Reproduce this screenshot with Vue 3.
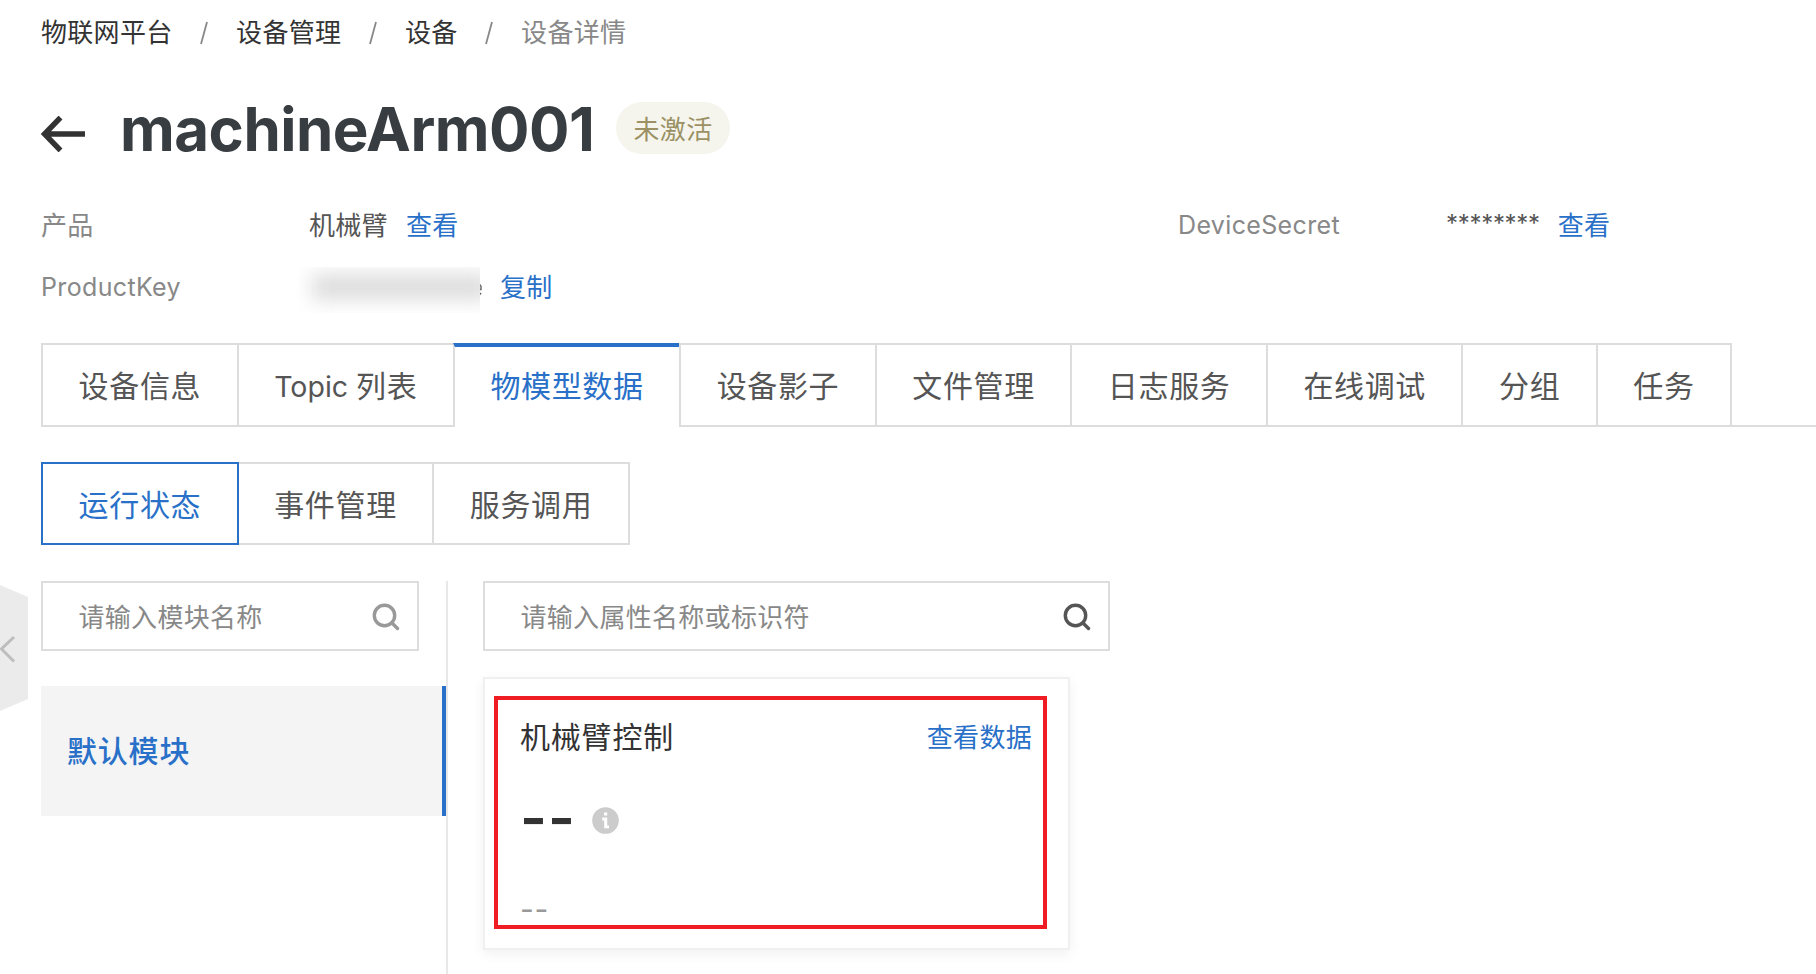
<script setup>
const crumbs = ['物联网平台', '设备管理', '设备', '设备详情']
const tabs = [
  { text: '设备信息' },
  { latin: 'Topic ', text: '列表' },
  { text: '物模型数据', active: true },
  { text: '设备影子' },
  { text: '文件管理' },
  { text: '日志服务' },
  { text: '在线调试' },
  { text: '分组' },
  { text: '任务' },
]
const modes = ['运行状态', '事件管理', '服务调用']
const activeMode = '运行状态'
</script>

<template>
  <div class="page">
    <nav class="crumbs">
      <template v-for="(c, i) in crumbs" :key="c">
        <svg v-if="i" class="slash" width="8" height="24" viewBox="0 0 8 24"><path d="M7 1 1 23" /></svg>
        <span :class="{ current: i === crumbs.length - 1 }">{{ c }}</span>
      </template>
    </nav>

    <header class="heading">
      <svg class="back" width="45" height="36" viewBox="0 0 45 36"><path d="M19.500 1.500 3.500 18 19.500 34.500M3 18H44" /></svg>
      <h1>machineArm001</h1>
      <span class="badge">未激活</span>
    </header>

    <section class="info">
      <div class="row">
        <span class="label">产品</span>
        <span class="value">机械臂</span>
        <a class="link">查看</a>
      </div>
      <div class="row">
        <span class="label latin">DeviceSecret</span>
        <span class="value stars">********</span>
        <a class="link">查看</a>
      </div>
      <div class="row">
        <span class="label latin">ProductKey</span>
        <span class="masked"><i class="smudge"></i></span>
        <svg class="tail" width="2" height="14" viewBox="0 0 2 14"><path d="M0 2.500 1 4.500V7.500H0M0 12.500 1 11" /></svg>
        <a class="link">复制</a>
      </div>
    </section>

    <div class="tabs">
      <div v-for="t in tabs" :key="t.text" class="tab" :class="{ active: t.active }"><span v-if="t.latin" class="word">{{ t.latin }}</span>{{ t.text }}</div>
      <div class="rest"></div>
    </div>

    <div class="modes">
      <div v-for="m in modes" :key="m" class="mode" :class="{ active: m === activeMode }">{{ m }}</div>
    </div>

    <main class="content">
      <aside class="side">
        <div class="search">
          <span>请输入模块名称</span>
          <svg class="glass" width="28" height="28" viewBox="0 0 28 28"><circle cx="12.5" cy="12.5" r="10.2" /><path d="m20 20 5.500 5.500" /></svg>
        </div>
        <div class="module">默认模块</div>
      </aside>
      <div class="main">
        <div class="search wide">
          <span>请输入属性名称或标识符</span>
          <svg class="glass" width="28" height="28" viewBox="0 0 28 28"><circle cx="12.5" cy="12.5" r="10.2" /><path d="m20 20 5.500 5.500" /></svg>
        </div>
        <div class="card">
          <div class="frame">
            <div class="card-head">
              <span class="name">机械臂控制</span>
              <a class="link">查看数据</a>
            </div>
            <div class="reading">
              <span class="big">--</span>
              <svg width="27" height="27" viewBox="0 0 27 27">
                <circle cx="13.5" cy="13.5" r="13.3" fill="#ccc" />
                <path d="M12 5.500h3.200v3H12zM10.200 10.500h5v8H17v2.700h-4.800v-7.700h-2z" fill="#fff" />
              </svg>
            </div>
            <div class="time">--</div>
          </div>
        </div>
      </div>
    </main>

    <svg class="handle" width="28" height="126" viewBox="0 0 28 126">
      <path d="M0 0 28 12V114L0 126Z" fill="#ebebeb" />
      <path d="M14 52 1.5 64 14 76.500" fill="none" stroke="#bdbdbd" stroke-width="3" />
    </svg>
  </div>
</template>

<style>
body {
  background: #fff;
  overflow: hidden;
}
</style>

<style scoped>
* {
  box-sizing: border-box;
}
.page {
  position: relative;
  height: 974px;
  overflow: hidden;
  padding-left: 41px;
  display: flex;
  flex-direction: column;
  font-family: Inter, "Noto Sans CJK SC", sans-serif;
  font-size: 26px;
  letter-spacing: 0.3px;
  color: #555;
  white-space: nowrap;
}
svg {
  flex: none;
}
.crumbs {
  display: flex;
  align-items: center;
  height: 60px;
  color: #333;
}
.crumbs .current {
  color: #888;
}
.slash {
  margin: 6px 28px 0 27.6px;
  fill: none;
  stroke: #888;
  stroke-width: 1.8;
}
.heading {
  display: flex;
  align-items: center;
  height: 128px;
  margin-top: 4px;
}
.back {
  margin: 12px 34px 0 0;
  fill: none;
  stroke: #333;
  stroke-width: 5.4;
}
h1 {
  width: 496px;
  margin: 1px 0 0;
  font-size: 60px;
  line-height: 72px;
  font-weight: 700;
  letter-spacing: -0.5px;
  color: #373d41;
}
.badge {
  width: 114px;
  height: 52px;
  padding-top: 2px;
  border-radius: 26px;
  background: #f5f5ed;
  color: #9b9164;
  line-height: 52px;
  text-align: center;
}
.info {
  display: grid;
  grid-template-columns: 1137px 1fr;
  grid-template-rows: 62px 62px;
}
.row {
  display: flex;
  align-items: center;
}
.label {
  width: 268px;
  color: #888;
}
.latin {
  padding-top: 4px;
  font-size: 25px;
  letter-spacing: 0.35px;
}
.stars {
  font-size: 24px;
  letter-spacing: -0.3px;
}
.link {
  color: #2970c8;
  margin-left: 18px;
}
.masked {
  width: 182px;
  height: 46px;
  margin: 10px 0 0 -11px;
  overflow: hidden;
}
.smudge {
  display: block;
  width: 178px;
  height: 24px;
  margin: 8px 0 0 14px;
  background: #dadada;
  filter: blur(10px);
}
.tail {
  margin-top: 8px;
  fill: none;
  stroke: #666;
  stroke-width: 1.4;
}
.tabs {
  display: flex;
  height: 84px;
  margin-top: 27px;
  font-size: 30px;
  letter-spacing: 0.65px;
}
.tab {
  flex: none;
  padding: 0 35.4px 0 35.6px;
  border: 2px solid #ddd;
  border-right: 0;
  line-height: 82px;
}
.word {
  font-size: 28.5px;
  letter-spacing: 0;
  white-space: pre;
}
.tab.active {
  border-top: 4px solid #2970c8;
  border-bottom: 0;
  line-height: 78px;
  color: #2970c8;
}
.rest {
  flex: 1;
  border-left: 2px solid #ddd;
  border-bottom: 2px solid #ddd;
}
.modes {
  display: flex;
  margin-top: 35px;
  height: 83px;
  font-size: 30px;
  letter-spacing: 0.65px;
}
.mode {
  padding: 0 35.4px 0 35.6px;
  border: 2px solid #ddd;
  border-left: 0;
  line-height: 82px;
}
.mode.active {
  border: 2px solid #2970c8;
  color: #2970c8;
}
.content {
  display: flex;
  flex: 1;
  margin-top: 36px;
}
.side {
  width: 407px;
  border-right: 2px solid #e8e8e8;
}
.search {
  display: flex;
  align-items: center;
  justify-content: space-between;
  width: 378px;
  height: 70px;
  padding: 0 17px 0 35.5px;
  border: 2px solid #ddd;
  color: #888;
}
.search span {
  margin-top: -2px;
}
.glass {
  margin-top: 2px;
  fill: none;
  stroke: #999;
  stroke-width: 3.4;
  stroke-linecap: round;
}
.wide {
  width: 627px;
}
.wide .glass {
  stroke: #555;
}
.module {
  height: 130px;
  margin-top: 35px;
  padding-left: 26px;
  border-right: 4px solid #2970c8;
  background: #f4f4f4;
  color: #2970c8;
  font-size: 30px;
  font-weight: 500;
  letter-spacing: 0.8px;
  line-height: 130px;
}
.main {
  margin-left: 35px;
}
.card {
  width: 587px;
  height: 273px;
  margin-top: 26px;
  padding: 17px 0 0 9px;
  border: 2px solid #f0f0f0;
  box-shadow: 0 4px 12px rgba(0, 0, 0, 0.06);
}
.frame {
  width: 553px;
  height: 233px;
  padding: 9px 11px 0 22px;
  border: 4px solid #ef1c24;
}
.card-head {
  display: flex;
  align-items: center;
  justify-content: space-between;
  height: 52px;
}
.name {
  font-size: 30px;
  letter-spacing: 0.8px;
  color: #333;
}
.reading {
  display: flex;
  align-items: center;
  gap: 18px;
  height: 60px;
  margin-top: 29px;
}
.big {
  width: 54px;
  margin-top: -4px;
  font-size: 58px;
  line-height: 60px;
  font-weight: 600;
  letter-spacing: 1px;
  color: #333;
}
.time {
  margin-top: 43px;
  font-size: 30px;
  line-height: 32px;
  letter-spacing: 0.8px;
  color: #999;
}
.handle {
  position: absolute;
  left: 0;
  top: 585px;
}
</style>
